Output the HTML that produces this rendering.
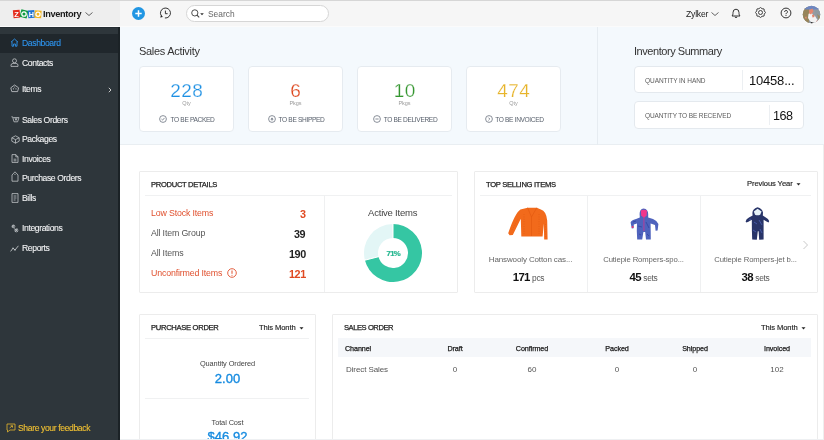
<!DOCTYPE html>
<html><head><meta charset="utf-8">
<style>
*{margin:0;padding:0;box-sizing:border-box}
html,body{width:824px;height:440px;overflow:hidden;background:#fff;font-family:"Liberation Sans",sans-serif}
.t,.nav,.hd,.card,.box{will-change:transform}
.abs{position:absolute}
.t{position:absolute;white-space:nowrap;line-height:1}
#top{position:absolute;left:0;top:0;width:824px;height:26px;background:#f6f6f6;border-top:1px solid #d6d6d6}
#side{position:absolute;left:0;top:27px;width:120px;height:413px;background:#2e363b;border-right:2px solid #1b2226}
.sel{position:absolute;left:0;top:34px;width:118px;height:18.5px;background:#20272c}
.nav{position:absolute;left:22px;font-size:8.6px;color:#f2f3f4;letter-spacing:-0.38px;line-height:1;-webkit-text-stroke:0.1px currentColor}
.ico{position:absolute;left:10px}
#sa{position:absolute;left:120px;top:27px;width:704px;height:118px;background:#f4f9fd;border-bottom:1px solid #e9eef2}
.card{position:absolute;background:#fff;border:1px solid #e6ebf0;border-radius:4px}
.num{position:absolute;left:0;width:100%;text-align:center;font-size:19px;line-height:1;letter-spacing:0.4px;text-indent:0.4px;-webkit-text-stroke:0.25px #fff}
.unit{position:absolute;left:0;width:100%;text-align:center;font-size:5.5px;color:#9a9a9a;line-height:1}
.lab{position:absolute;left:0;width:100%;text-align:center;font-size:6.6px;color:#58606c;line-height:1;letter-spacing:-0.35px}
.box{position:absolute;background:#fff;border:1px solid #e4e9ee;border-radius:4px}
.hd{position:absolute;font-size:7.6px;font-weight:normal;color:#222;line-height:1;letter-spacing:-0.3px;-webkit-text-stroke:0.25px #222}
.gline{position:absolute;height:1px;background:#f0f1f2}
.vline{position:absolute;width:1px;background:#eff0f1}
</style></head><body>

<!-- TOP BAR -->
<div id="top"></div>
<div class="abs" style="left:0;top:26px;width:824px;height:1px;background:#fbfbfb"></div>
<div class="abs" style="left:0;top:1px;width:120px;height:25px;background:#eeeeee"></div>
<!-- zoho logo -->
<svg class="abs" style="left:12px;top:8px;will-change:transform" width="31" height="12" viewBox="0 0 31 12">
 <g transform="rotate(-6 4.5 6)"><rect x="1.2" y="2" width="6.8" height="8" fill="#e42b1c"/></g>
 <g transform="rotate(14 12 6)"><rect x="8.4" y="2.1" width="7.2" height="7.6" fill="#0d9a3e"/></g>
 <g transform="rotate(-5 19.3 6)"><rect x="16" y="2.3" width="6.6" height="7.8" fill="#1f73d2"/></g>
 <g transform="rotate(4 26 6)"><rect x="22.6" y="2.5" width="6.8" height="7.6" fill="#f2b61f"/></g>
 <text x="4.6" y="8.9" font-size="7.4" font-weight="bold" fill="#fff" text-anchor="middle" font-family="Liberation Sans">Z</text>
 <circle cx="12" cy="6" r="2.2" fill="none" stroke="#fff" stroke-width="1.3"/>
 <text x="19.3" y="9" font-size="7.2" font-weight="bold" fill="#fff" text-anchor="middle" font-family="Liberation Sans">H</text>
 <circle cx="26" cy="6.3" r="2.1" fill="none" stroke="#fff" stroke-width="1.3"/>
</svg>
<div class="t" style="left:43px;top:10px;font-size:9.2px;font-weight:bold;color:#1a1a1a;letter-spacing:-0.35px">Inventory</div>
<svg class="abs" style="left:85px;top:12px" width="8" height="4" viewBox="0 0 8 4"><path d="M0.5 0.5 L4 3.5 L7.5 0.5" fill="none" stroke="#555" stroke-width="0.9"/></svg>

<!-- plus -->
<div class="abs" style="left:132px;top:7px;width:13px;height:13px;border-radius:50%;background:#2196e3"></div>
<svg class="abs" style="left:132px;top:7px" width="13" height="13" viewBox="0 0 13 13"><path d="M6.5 3.3 V9.7 M3.3 6.5 H9.7" stroke="#fff" stroke-width="1.5"/></svg>
<!-- history -->
<svg class="abs" style="left:159px;top:7px" width="13" height="13" viewBox="0 0 13 13">
 <path d="M5.9 11 A5 5 0 1 0 2.3 8.8" fill="none" stroke="#333" stroke-width="1"/>
 <path d="M1.2 10.4 L2.2 7.9 L3.9 9.9 Z" fill="#222"/>
 <path d="M6.4 3.6 V6.7 H8.6" fill="none" stroke="#333" stroke-width="1"/>
</svg>
<!-- search -->
<div class="abs" style="left:186px;top:5px;width:143px;height:17px;border:1px solid #d6d6d6;border-radius:9px;background:#fff"></div>
<svg class="abs" style="left:191px;top:8.5px" width="14" height="10" viewBox="0 0 14 10">
 <circle cx="3.8" cy="3.9" r="3.1" fill="none" stroke="#444" stroke-width="0.95"/>
 <path d="M6 6.1 L8.2 8.4" stroke="#444" stroke-width="1.1"/>
 <path d="M9.2 4.3 H12.8 L11 6.3 Z" fill="#333"/>
</svg>
<div class="t" style="left:208px;top:10px;font-size:8.4px;color:#666">Search</div>

<div class="t" style="left:686px;top:10px;font-size:8.6px;color:#222;letter-spacing:-0.2px">Zylker</div>
<svg class="abs" style="left:711px;top:12px" width="8" height="4" viewBox="0 0 8 4"><path d="M0.5 0.5 L4 3.5 L7.5 0.5" fill="none" stroke="#555" stroke-width="0.9"/></svg>
<!-- bell -->
<svg class="abs" style="left:731px;top:7.5px" width="10" height="11" viewBox="0 0 10 11">
 <path d="M1 8 Q2 7.2 2 5.4 V4.6 A3 3.4 0 0 1 8 4.6 V5.4 Q8 7.2 9 8 Z" fill="none" stroke="#333" stroke-width="1" stroke-linejoin="round"/>
 <path d="M3.8 9 Q5 10.2 6.2 9" fill="none" stroke="#333" stroke-width="1"/>
</svg>
<!-- gear -->
<svg class="abs" style="left:755px;top:7.3px" width="11" height="11" viewBox="0 0 11 11">
 <path d="M5.50 0.50 L7.07 1.71 L9.04 1.96 L9.29 3.93 L10.50 5.50 L9.29 7.07 L9.04 9.04 L7.07 9.29 L5.50 10.50 L3.93 9.29 L1.96 9.04 L1.71 7.07 L0.50 5.50 L1.71 3.93 L1.96 1.96 L3.93 1.71 Z" fill="none" stroke="#444" stroke-width="1" stroke-linejoin="round"/>
 <circle cx="5.5" cy="5.5" r="2" fill="none" stroke="#444" stroke-width="1"/>
</svg>
<!-- help -->
<svg class="abs" style="left:779.5px;top:7.3px" width="12" height="12" viewBox="0 0 12 12">
 <circle cx="6" cy="6" r="4.9" fill="none" stroke="#333" stroke-width="1"/>
 <path d="M4.6 4.9 A1.45 1.35 0 1 1 6.5 6.1 Q6 6.4 6 7.2" fill="none" stroke="#333" stroke-width="1"/>
 <circle cx="6" cy="8.5" r="0.6" fill="#333"/>
</svg>
<!-- avatar -->
<svg class="abs" style="left:802px;top:4.5px" width="19" height="19" viewBox="0 0 19 19">
 <defs><clipPath id="av"><circle cx="9.5" cy="9.5" r="8.8"/></clipPath></defs>
 <circle cx="9.5" cy="9.5" r="9.5" fill="#fff"/>
 <g clip-path="url(#av)">
  <rect width="19" height="19" fill="#959ca2"/>
  <path d="M0 2 H6 L8 7 L6.5 19 H0 Z" fill="#978459"/>
  <path d="M3 0 H17 V4.5 H3 Z" fill="#6d86c0"/>
  <path d="M13 5 L19 6 V19 L15 19 Z" fill="#8f9aa0"/>
  <path d="M15 9 L19 12 V17 L17 16 Z" fill="#9c8d63"/>
  <path d="M6.5 9 L9 6.5 L11 10 L13 11 L15.5 15 L14 18 L11 18.5 L8 16 L6 13 Z" fill="#f2f2f2"/>
  <path d="M7 5 L10.5 3.5 L11.5 6.5 L9 9.5 L7.2 8.5 Z" fill="#e4876f"/>
  <path d="M10 10 L12 9.5 L12.5 12 L10.5 12.5 Z" fill="#e0846c"/>
  <path d="M3 12 L4.5 11.5 L4.8 13.5 L3.2 13.5 Z" fill="#e28a70"/>
  <path d="M14.5 15.5 L17 16 L16.5 17.5 L14.5 17.3 Z" fill="#e08670"/>
  <path d="M9 17 L12.5 18 L11.5 19 L8.5 19 Z" fill="#1e1e1e"/>
 </g>
</svg>

<!-- SIDEBAR -->
<div id="side"></div>
<div class="abs" style="left:0;top:27px;width:118px;height:1px;background:#252d32"></div>
<div class="sel"></div>
<div class="nav" style="top:39px;color:#2e95ef">Dashboard</div>
<div class="nav" style="top:59px">Contacts</div>
<div class="nav" style="top:85px">Items</div>
<div class="nav" style="top:115.5px">Sales Orders</div>
<div class="nav" style="top:135px">Packages</div>
<div class="nav" style="top:154.5px">Invoices</div>
<div class="nav" style="top:174px">Purchase Orders</div>
<div class="nav" style="top:194px">Bills</div>
<div class="nav" style="top:224px">Integrations</div>
<div class="nav" style="top:244px">Reports</div>
<div class="nav" style="top:424px;left:18px;color:#f2c233">Share your feedback</div>
<svg class="abs" style="left:108px;top:87px" width="4" height="6" viewBox="0 0 4 6"><path d="M0.8 0.8 L3 3 L0.8 5.2" fill="none" stroke="#ccc" stroke-width="1"/></svg>

<!-- nav icons -->
<svg class="abs" style="left:10px;top:38px" width="9" height="9" viewBox="0 0 9 9"><path d="M1 4.2 L4.5 1 L8 4.2 M2 3.5 V8.2 H3.6 V6 H5.4 V8.2 H7 V3.5" fill="none" stroke="#2e95ef" stroke-width="0.9"/></svg>
<svg class="abs" style="left:10px;top:58px" width="9" height="9" viewBox="0 0 9 9"><circle cx="4.5" cy="2.8" r="2" fill="none" stroke="#c9cdd0" stroke-width="0.75"/><path d="M1 8.4 V7.2 Q1 5.6 3 5.4 H6 Q8 5.6 8 7.2 V8.4 Z" fill="none" stroke="#c9cdd0" stroke-width="0.75"/></svg>
<svg class="abs" style="left:10px;top:84px" width="10" height="9" viewBox="0 0 10 9"><path d="M0.8 3.8 L4.6 1 L8.6 3.8 L7.6 7.6 H1.8 Z" fill="none" stroke="#c9cdd0" stroke-width="0.8" stroke-linejoin="round"/><circle cx="3.4" cy="4.8" r="0.6" fill="#c9cdd0"/><circle cx="6" cy="4.8" r="0.6" fill="#c9cdd0"/><circle cx="4.7" cy="3" r="0.5" fill="#c9cdd0"/></svg>
<svg class="abs" style="left:10.5px;top:116px" width="9" height="7" viewBox="0 0 9 7"><path d="M0.4 0.8 H1.6 L3 5.8 H6.6 L8 1.6 H2.2 M4 1.8 L4.8 4.4 M6 1.8 L5.2 4.4" fill="none" stroke="#c9cdd0" stroke-width="0.75"/></svg>
<svg class="abs" style="left:10.5px;top:134.5px" width="9" height="9" viewBox="0 0 9 9"><path d="M4.5 0.8 L8.2 2.8 V6.2 L4.5 8.2 L0.8 6.2 V2.8 Z M0.8 2.8 L4.5 4.6 L8.2 2.8 M4.5 4.6 V8.2" fill="none" stroke="#c9cdd0" stroke-width="0.75" stroke-linejoin="round"/></svg>
<svg class="abs" style="left:11px;top:154px" width="8" height="9" viewBox="0 0 8 9"><path d="M1 0.6 H4.8 L7 2.8 V8.4 H1 Z M4.8 0.6 V2.8 H7 M2.6 5.2 H5.4 M2.6 6.8 H5.4" fill="none" stroke="#c9cdd0" stroke-width="0.75"/></svg>
<svg class="abs" style="left:11px;top:170.5px" width="8" height="11" viewBox="0 0 8 11"><path d="M1 4 L4 0.8 L7 4 V10.2 H1 Z" fill="none" stroke="#c9cdd0" stroke-width="0.75" stroke-linejoin="round"/><circle cx="4" cy="3.3" r="0.55" fill="#c9cdd0"/></svg>
<svg class="abs" style="left:11px;top:193px" width="8" height="10" viewBox="0 0 8 10"><path d="M1 0.6 H7 V9.4 H1 Z M2.6 3 H5.4 M2.6 5 H5.4 M2.6 7 H4.6" fill="none" stroke="#c9cdd0" stroke-width="0.75"/></svg>
<svg class="abs" style="left:10.5px;top:223.5px" width="8" height="9" viewBox="0 0 8 9"><path d="M1 1.6 L3 3.4 M3 1 L1.4 3.2 M3.2 4.6 L6.6 7.4 M4.2 7.8 L6.2 4.6" fill="none" stroke="#c9cdd0" stroke-width="0.8"/><circle cx="2.4" cy="2.4" r="1.4" fill="none" stroke="#c9cdd0" stroke-width="0.7"/><circle cx="5.4" cy="6.4" r="1.5" fill="none" stroke="#c9cdd0" stroke-width="0.7"/></svg>
<svg class="abs" style="left:10px;top:244.5px" width="9" height="7" viewBox="0 0 9 7"><path d="M0.6 6.4 L3 3.2 L5 5 L8.4 0.8" fill="none" stroke="#c9cdd0" stroke-width="0.85"/><circle cx="3" cy="3.2" r="0.7" fill="#c9cdd0"/><circle cx="5" cy="5" r="0.7" fill="#c9cdd0"/></svg>
<svg class="abs" style="left:6px;top:423px" width="10" height="10" viewBox="0 0 10 10"><path d="M1 1 H9 V7 H4 L1.5 9 V7 H1 Z M3.5 5 L6.5 2.8 M4.6 2.8 H6.5 V4.6" fill="none" stroke="#e3b52f" stroke-width="0.8"/></svg>
<!-- SALES ACTIVITY -->
<div id="sa"></div>
<div class="abs" style="left:597px;top:27px;width:1px;height:118px;background:#e6ecf1"></div>
<div class="t" style="left:139px;top:46px;font-size:11px;color:#333;letter-spacing:-0.3px">Sales Activity</div>
<div class="t" style="left:634px;top:46px;font-size:11px;color:#333;letter-spacing:-0.45px">Inventory Summary</div>

<div class="card" style="left:139px;top:66px;width:95px;height:66px">
 <div class="num" style="top:14px;color:#1b8fe3">228</div>
 <div class="unit" style="top:34px">Qty</div>
 <div class="lab" style="top:49.5px;padding-left:12px">TO BE PACKED</div>
</div>
<div class="card" style="left:248px;top:66px;width:95px;height:66px">
 <div class="num" style="top:14px;color:#dd4318">6</div>
 <div class="unit" style="top:34px">Pkgs</div>
 <div class="lab" style="top:49.5px;padding-left:12px">TO BE SHIPPED</div>
</div>
<div class="card" style="left:357px;top:66px;width:95px;height:66px">
 <div class="num" style="top:14px;color:#34962f">10</div>
 <div class="unit" style="top:34px">Pkgs</div>
 <div class="lab" style="top:49.5px;padding-left:12px">TO BE DELIVERED</div>
</div>
<div class="card" style="left:466px;top:66px;width:95px;height:66px">
 <div class="num" style="top:14px;color:#e7b42a">474</div>
 <div class="unit" style="top:34px">Qty</div>
 <div class="lab" style="top:49.5px;padding-left:12px">TO BE INVOICED</div>
</div>


<svg class="abs" style="left:159px;top:115px" width="8" height="8" viewBox="0 0 8 8"><circle cx="4" cy="4" r="3.4" fill="none" stroke="#6c7480" stroke-width="0.8"/><path d="M2.5 4.1 L3.6 5.1 L5.5 2.9" fill="none" stroke="#6c7480" stroke-width="0.8"/></svg>
<svg class="abs" style="left:268px;top:115px" width="8" height="8" viewBox="0 0 8 8"><circle cx="4" cy="4" r="3.4" fill="none" stroke="#6c7480" stroke-width="0.8"/><path d="M2.4 4.4 L4 2.6 L5.6 4.4 Z" fill="#6c7480"/><path d="M4 4 V5.6" stroke="#6c7480" stroke-width="0.8"/></svg>
<svg class="abs" style="left:373px;top:115px" width="8" height="8" viewBox="0 0 8 8"><circle cx="4" cy="4" r="3.4" fill="none" stroke="#6c7480" stroke-width="0.8"/><path d="M2.4 4 H5.6" stroke="#6c7480" stroke-width="0.8"/></svg>
<svg class="abs" style="left:484.5px;top:115px" width="8" height="8" viewBox="0 0 8 8"><circle cx="4" cy="4" r="3.4" fill="none" stroke="#6c7480" stroke-width="0.8"/><path d="M3.4 2.6 L4.8 4 L3.4 5.4" fill="none" stroke="#6c7480" stroke-width="0.8"/></svg>
<div class="box" style="left:634px;top:66px;width:170px;height:27px">
 <div class="t" style="left:10px;top:10.5px;font-size:6.5px;color:#5c5c5c;letter-spacing:-0.05px">QUANTITY IN HAND</div>
 <div class="abs" style="left:107px;top:3px;width:1px;height:20px;background:#eceff2"></div>
 <div class="t" style="left:114px;top:7px;font-size:13px;color:#111;letter-spacing:-0.2px">10458...</div>
</div>
<div class="box" style="left:634px;top:101px;width:170px;height:28px">
 <div class="t" style="left:10px;top:10.5px;font-size:6.5px;color:#5c5c5c;letter-spacing:-0.12px">QUANTITY TO BE RECEIVED</div>
 <div class="abs" style="left:134px;top:3px;width:1px;height:20px;background:#eceff2"></div>
 <div class="t" style="left:137.5px;top:7.5px;font-size:12.6px;color:#111;letter-spacing:-0.5px">168</div>
</div>

<!-- PRODUCT DETAILS -->
<div class="box" style="left:139px;top:171px;width:319px;height:122px;border-radius:1px;border-color:#ececec"></div>
<div class="hd" style="left:151px;top:181px">PRODUCT DETAILS</div>
<div class="gline" style="left:145px;top:194.5px;width:307px"></div>
<div class="vline" style="left:324px;top:195px;height:97px"></div>
<div class="t" style="left:151px;top:209px;font-size:8.8px;color:#e0502e;letter-spacing:-0.15px">Low Stock Items</div>
<div class="t" style="left:151px;top:229px;font-size:8.8px;color:#555;letter-spacing:-0.15px">All Item Group</div>
<div class="t" style="left:151px;top:249px;font-size:8.8px;color:#555;letter-spacing:-0.15px">All Items</div>
<div class="t" style="left:151px;top:269px;font-size:8.8px;color:#e0502e;letter-spacing:-0.15px">Unconfirmed Items</div>
<svg class="abs" style="left:226.5px;top:267.5px" width="10" height="10" viewBox="0 0 10 10"><circle cx="5" cy="5" r="4.3" fill="none" stroke="#e0502e" stroke-width="0.9"/><path d="M5 2.5 V5.8" stroke="#e0502e" stroke-width="1"/><circle cx="5" cy="7.3" r="0.55" fill="#e0502e"/></svg>
<div class="t" style="right:518.4px;top:208.7px;font-size:10.8px;font-weight:bold;color:#e04a22;letter-spacing:-0.4px">3</div>
<div class="t" style="right:518.4px;top:228.7px;font-size:10.8px;font-weight:bold;color:#222;letter-spacing:-0.4px">39</div>
<div class="t" style="right:518.4px;top:248.7px;font-size:10.8px;font-weight:bold;color:#222;letter-spacing:-0.4px">190</div>
<div class="t" style="right:518.4px;top:268.7px;font-size:10.8px;font-weight:bold;color:#e04a22;letter-spacing:-0.4px">121</div>

<div class="t" style="left:368px;top:208px;font-size:9.5px;color:#444;letter-spacing:-0.2px">Active Items</div>
<svg class="abs" style="left:364px;top:224px" width="58" height="58" viewBox="0 0 58 58">
 <path d="M0.79 35.72 A29 29 0 0 1 28.65 0.00 L28.82 14.00 A15 15 0 0 0 14.41 32.48 Z" fill="#e3f6f6"/>
 <path d="M29.00 0.00 A29 29 0 1 1 0.91 36.21 L14.47 32.73 A15 15 0 1 0 29.00 14.00 Z" fill="#35c6a3"/>
 <path d="M29.00 15.00 L29.00 -1.00 M15.44 32.48 L-0.06 36.46" stroke="#fff" stroke-width="1"/>
</svg>
<div class="t" style="left:383px;top:249.6px;width:20px;text-align:center;font-size:7.8px;font-weight:bold;color:#25b68f;letter-spacing:-0.6px;text-indent:0.6px;-webkit-text-stroke:0.2px #25b68f">71%</div>

<!-- TOP SELLING -->
<div class="box" style="left:474px;top:171px;width:344px;height:122px;border-radius:1px;border-color:#ececec"></div>
<div class="hd" style="left:486px;top:181px">TOP SELLING ITEMS</div>
<div class="t" style="left:747px;top:180.2px;font-size:7.6px;color:#1e1e1e;letter-spacing:-0.1px;-webkit-text-stroke:0.15px #1e1e1e">Previous Year</div>
<svg class="abs" style="left:796.0px;top:183.0px" width="5" height="3" viewBox="0 0 5 3"><path d="M0.5 0.3 H4.5 L2.5 2.4 Z" fill="#222"/></svg>
<div class="gline" style="left:480px;top:195px;width:331px"></div>
<div class="vline" style="left:587px;top:196px;height:96px"></div>
<div class="vline" style="left:700px;top:196px;height:96px"></div>
<svg class="abs" style="left:802px;top:240px" width="7" height="10" viewBox="0 0 7 10"><path d="M1.5 1 L5.5 5 L1.5 9" fill="none" stroke="#c8c8c8" stroke-width="1"/></svg>


<svg class="abs" style="left:500px;top:200px" width="60" height="45" viewBox="0 0 60 45">
 <path d="M27.6 7.7 L20.4 9.5 Q15 13 8.2 33.2 L9.6 35.3 L12.8 34.9 L20.8 18.8 L21.3 36.4 L42.6 36.4 L43.8 23.5 L44.2 39.6 L47.6 39.4 L47.2 20.4 Q46.2 11 40.9 9.5 L36.8 7.7 Z" fill="#f26a1b"/>
 <path d="M27.6 7.7 L31.5 17 L36.8 7.7 M31.5 17 L31.5 36" fill="none" stroke="#e0580f" stroke-width="0.6"/>
 <path d="M12 30 L18 19 M45.6 24 L45.8 37 M24 14 L24 34 M39 14 L39 34" fill="none" stroke="#e05a12" stroke-width="0.6" stroke-dasharray="1 1.4"/>
</svg>
<svg class="abs" style="left:620px;top:200px" width="50" height="45" viewBox="0 0 50 45">
 <path d="M23.6 8.4 Q19.5 9 19.6 14 L19.8 17.6 L16 19 Q11 20.4 10.6 22.4 L11.8 28.6 L13.6 28.2 L13.8 24.4 L17 23.4 L16.8 31 L17.2 39.4 L22.2 39.4 L23.4 32 L25.2 32 L26 39.4 L30.8 39.4 L30.7 31 L30.6 23.6 L35 25 L35.6 30.8 L37.6 30.6 L38.4 24 Q37 20.6 33 19 L28.2 17.6 L28.2 14 Q28.2 9 23.6 8.4 Z" fill="#4f63bd"/>
 <path d="M20.8 10.6 Q23.8 8.8 27 10.6 L26.6 15.6 L23.9 18 L21.2 15.6 Z" fill="#f0368c"/>
 <path d="M23.9 17 V31" stroke="#b0409a" stroke-width="1.1"/>
 <path d="M18 26 L22 27 M26 22 L29 28 M19 34 L21 35 M27 34 L29 36 M13 22 L16 21" stroke="#3444a0" stroke-width="0.8"/>
 <circle cx="12.6" cy="27" r="1" fill="#e8346c"/>
</svg>
<svg class="abs" style="left:735px;top:200px" width="45" height="45" viewBox="0 0 45 45">
 <path d="M22.4 7.2 Q17.6 8.6 17.4 13 L17.6 15.6 L14 17.4 Q11 19 10.6 21.4 L11.4 22.6 L13.4 21.8 L16.8 19.8 L16.9 30.8 L17.2 39.6 L21.8 39.8 L22.8 31.2 L23.6 31.2 L24.2 39.8 L28.6 39.6 L28.6 30.8 L28.6 19.8 L32 21.8 L33.6 22.4 L34.2 21 Q33.4 18.6 30.8 17.4 L27.8 15.4 L28 12.6 Q27.4 8.4 22.4 7.2 Z" fill="#283468"/>
 <path d="M18.8 11.6 L22.6 8.8 L26.6 11.6 L25.2 14.8 Q22.6 15.8 20 14.8 Z" fill="#e6f2f8"/>
 <path d="M19 22 L22 24 M24 20 L27 25 M18 30 L21 32 M25 29 L27 33 M14 20 L16 19" stroke="#4a5fb4" stroke-width="0.8"/>
</svg>
<div class="t" style="left:477px;top:255.6px;width:107px;text-align:center;font-size:8px;color:#666;letter-spacing:-0.12px">Hanswooly Cotton cas...</div>
<div class="t" style="left:587px;top:255.6px;width:113px;text-align:center;font-size:7.7px;color:#666;letter-spacing:-0.1px">Cutiepie Rompers-spo...</div>
<div class="t" style="left:697px;top:255.6px;width:117px;text-align:center;font-size:7.7px;color:#666;letter-spacing:-0.1px">Cutiepie Rompers-jet b...</div>
<div class="t" style="left:475px;top:268px;width:107px;text-align:center;color:#111"><b style="font-size:11.4px;letter-spacing:-0.7px">171</b><span style="font-size:8.4px;color:#555;letter-spacing:-0.3px;margin-left:2.4px">pcs</span></div>
<div class="t" style="left:587px;top:268px;width:113px;text-align:center;color:#111"><b style="font-size:11.4px;letter-spacing:-0.7px">45</b><span style="font-size:8.4px;color:#555;letter-spacing:-0.3px;margin-left:2.4px">sets</span></div>
<div class="t" style="left:697px;top:268px;width:117px;text-align:center;color:#111"><b style="font-size:11.4px;letter-spacing:-0.7px">38</b><span style="font-size:8.4px;color:#555;letter-spacing:-0.3px;margin-left:2.4px">sets</span></div>

<!-- PURCHASE ORDER -->
<div class="box" style="left:139px;top:314px;width:177px;height:140px;border-radius:1px;border-color:#ececec"></div>
<div class="hd" style="left:151px;top:323.5px">PURCHASE ORDER</div>
<div class="t" style="left:259px;top:324px;font-size:7.6px;color:#1e1e1e;letter-spacing:-0.1px;-webkit-text-stroke:0.15px #1e1e1e">This Month</div>
<svg class="abs" style="left:299.0px;top:327.0px" width="5" height="3" viewBox="0 0 5 3"><path d="M0.5 0.3 H4.5 L2.5 2.4 Z" fill="#222"/></svg>
<div class="gline" style="left:145px;top:338px;width:164px"></div>
<div class="t" style="left:139px;top:359.5px;width:177px;text-align:center;font-size:7.4px;color:#444;letter-spacing:-0.1px">Quantity Ordered</div>
<div class="t" style="left:139px;top:372px;width:177px;text-align:center;font-size:13px;color:#168be0;-webkit-text-stroke:0.35px #168be0">2.00</div>
<div class="gline" style="left:145px;top:398px;width:164px"></div>
<div class="t" style="left:139px;top:418.5px;width:177px;text-align:center;font-size:7.4px;color:#444;letter-spacing:-0.1px">Total Cost</div>
<div class="t" style="left:139px;top:430px;width:177px;text-align:center;font-size:13px;color:#168be0;-webkit-text-stroke:0.35px #168be0">$46.92</div>

<!-- SALES ORDER -->
<div class="box" style="left:332px;top:314px;width:486px;height:140px;border-radius:1px;border-color:#ececec"></div>
<div class="hd" style="left:344px;top:324px;letter-spacing:-0.45px">SALES ORDER</div>
<div class="t" style="left:761px;top:324px;font-size:7.6px;color:#1e1e1e;letter-spacing:-0.1px;-webkit-text-stroke:0.15px #1e1e1e">This Month</div>
<svg class="abs" style="left:801.0px;top:327.0px" width="5" height="3" viewBox="0 0 5 3"><path d="M0.5 0.3 H4.5 L2.5 2.4 Z" fill="#222"/></svg>
<div class="abs" style="left:338px;top:338px;width:473px;height:19px;background:#f5f7fa"></div>
<div class="t" style="left:345px;top:344.5px;font-size:7.2px;color:#1a1a1a;letter-spacing:-0.1px;-webkit-text-stroke:0.25px #1a1a1a">Channel</div>
<div class="t" style="left:425px;top:344.5px;width:60px;text-align:center;font-size:7.2px;color:#1a1a1a;letter-spacing:-0.1px;-webkit-text-stroke:0.25px #1a1a1a">Draft</div>
<div class="t" style="left:502px;top:344.5px;width:60px;text-align:center;font-size:7.2px;color:#1a1a1a;letter-spacing:-0.1px;-webkit-text-stroke:0.25px #1a1a1a">Confirmed</div>
<div class="t" style="left:587px;top:344.5px;width:60px;text-align:center;font-size:7.2px;color:#1a1a1a;letter-spacing:-0.1px;-webkit-text-stroke:0.25px #1a1a1a">Packed</div>
<div class="t" style="left:665px;top:344.5px;width:60px;text-align:center;font-size:7.2px;color:#1a1a1a;letter-spacing:-0.1px;-webkit-text-stroke:0.25px #1a1a1a">Shipped</div>
<div class="t" style="left:747px;top:344.5px;width:60px;text-align:center;font-size:7.2px;color:#1a1a1a;letter-spacing:-0.1px;-webkit-text-stroke:0.25px #1a1a1a">Invoiced</div>
<div class="t" style="left:346px;top:365.5px;font-size:8px;color:#555;letter-spacing:-0.1px">Direct Sales</div>
<div class="t" style="left:425px;top:365.5px;width:60px;text-align:center;font-size:8px;color:#555">0</div>
<div class="t" style="left:502px;top:365.5px;width:60px;text-align:center;font-size:8px;color:#555">60</div>
<div class="t" style="left:587px;top:365.5px;width:60px;text-align:center;font-size:8px;color:#555">0</div>
<div class="t" style="left:665px;top:365.5px;width:60px;text-align:center;font-size:8px;color:#555">0</div>
<div class="t" style="left:747px;top:365.5px;width:60px;text-align:center;font-size:8px;color:#555">102</div>

<div class="abs" style="left:120px;top:439px;width:704px;height:1px;background:#eef0f2"></div>
<div class="abs" style="left:823px;top:145px;width:1px;height:295px;background:#eeeeee"></div>
</body></html>
